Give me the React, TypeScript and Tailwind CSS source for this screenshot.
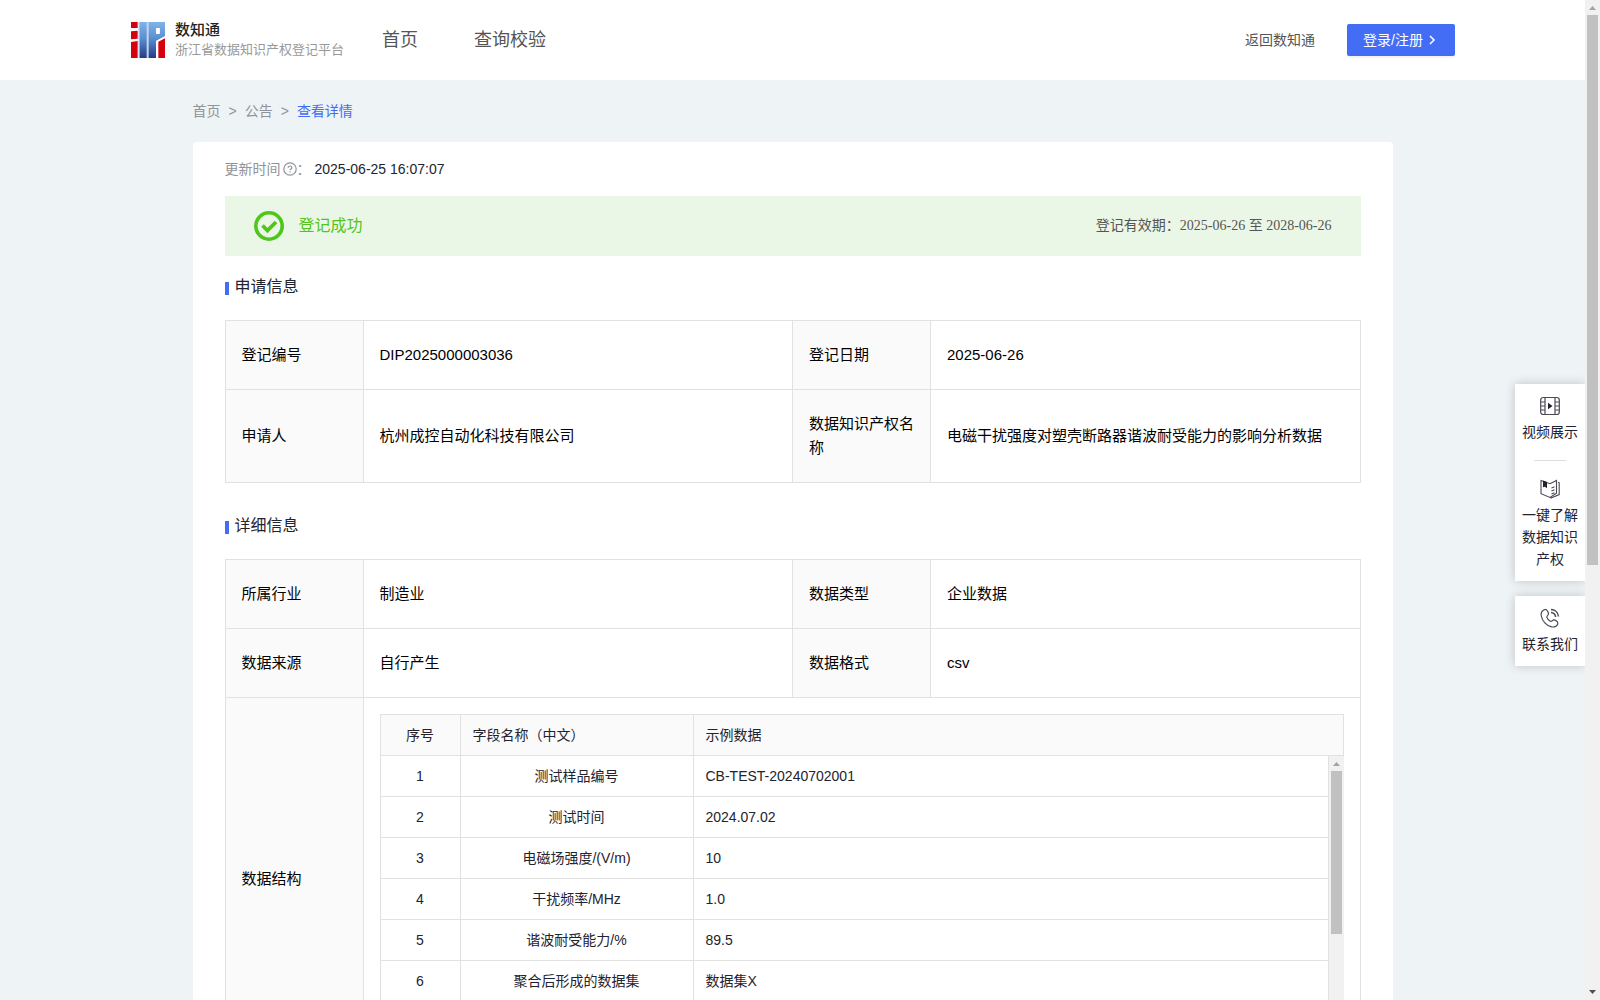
import { FC, ReactNode } from 'react'

interface InfoRow {
  label: string
  value: string
}

interface FieldRow {
  name: string
  sample: string
}

const applyInfo: [InfoRow, InfoRow][] = [
  [
    { label: '登记编号', value: 'DIP2025000003036' },
    { label: '登记日期', value: '2025-06-26' },
  ],
  [
    { label: '申请人', value: '杭州成控自动化科技有限公司' },
    { label: '数据知识产权名称', value: '电磁干扰强度对塑壳断路器谐波耐受能力的影响分析数据' },
  ],
]

const detailInfo: [InfoRow, InfoRow][] = [
  [
    { label: '所属行业', value: '制造业' },
    { label: '数据类型', value: '企业数据' },
  ],
  [
    { label: '数据来源', value: '自行产生' },
    { label: '数据格式', value: 'csv' },
  ],
]

const fields: FieldRow[] = [
  { name: '测试样品编号', sample: 'CB-TEST-20240702001' },
  { name: '测试时间', sample: '2024.07.02' },
  { name: '电磁场强度/(V/m)', sample: '10' },
  { name: '干扰频率/MHz', sample: '1.0' },
  { name: '谐波耐受能力/%', sample: '89.5' },
  { name: '聚合后形成的数据集', sample: '数据集X' },
]

const Logo: FC = () => (
  <svg viewBox="0 0 102 108" className="h-9 w-[34px] shrink-0" aria-hidden="true">
    <defs>
      <linearGradient id="logoBlue" x1="0" y1="0" x2="0" y2="108" gradientUnits="userSpaceOnUse">
        <stop offset="0" stopColor="#7fb4ea" />
        <stop offset="0.45" stopColor="#5b8fd0" />
        <stop offset="1" stopColor="#263a86" />
      </linearGradient>
    </defs>
    <path fill="#d7000f" d="M0 0h20v18H0zM0 28l20-2v24L0 52zM0 60l20-3v51H0z" />
    <path fill="#c3d6ee" d="M22 0h56v108H22z" />
    <path fill="url(#logoBlue)" d="M26 0h21v108H26zM53 0h49v43L75 57v51H53zM75 18v17h11V18z" fillRule="evenodd" />
    <path fill="#fff" d="M75 18h11v17H75zM75 57l27-14v6L80 60v48h-5z" />
    <path fill="#d7000f" d="M82 59l20-10v59H82z" />
  </svg>
)

const Header: FC = () => (
  <header className="flex h-20 items-center bg-white pr-[130px] pl-[131px]">
    <a href="#" className="flex items-center gap-2.5">
      <Logo />
      <span className="flex flex-col">
        <span className="text-[15px] leading-5 font-medium text-[#222222]">数知通</span>
        <span className="text-[13px] leading-5 text-[#999999]">浙江省数据知识产权登记平台</span>
      </span>
    </a>
    <nav className="ml-[38px] flex gap-14 text-lg text-[#555555]">
      <a href="#">首页</a>
      <a href="#">查询校验</a>
    </nav>
    <div className="ml-auto flex items-center gap-8 text-sm">
      <a href="#" className="text-[#555555]">
        返回数知通
      </a>
      <button
        type="button"
        className="flex h-8 w-[108px] items-center gap-0.5 rounded-[2px] bg-[#446df6] pl-4 text-white shadow-[0_2px_0_rgba(0,0,0,0.045)]"
      >
        登录/注册
        <svg viewBox="0 0 14 14" className="size-3.5" aria-hidden="true">
          <path d="M5 3l4 4-4 4" fill="none" stroke="currentColor" strokeWidth="1.5" />
        </svg>
      </button>
    </div>
  </header>
)

const Breadcrumb: FC = () => (
  <nav className="flex h-[62px] items-center gap-2 text-sm text-[#909399]">
    <a href="#">首页</a>
    <span className="font-medium">&gt;</span>
    <a href="#">公告</a>
    <span className="font-medium">&gt;</span>
    <a href="#" className="text-[#446df6]">
      查看详情
    </a>
  </nav>
)

const SectionTitle: FC<{ children: ReactNode }> = ({ children }) => (
  <h2 className="flex items-center gap-1.5 text-base leading-6 text-[#23232f]">
    <span className="mt-0.5 h-[13px] w-1 bg-[#446df6]" />
    {children}
  </h2>
)

const InfoTable: FC<{ rows: [InfoRow, InfoRow][]; children?: ReactNode }> = ({ rows, children }) => (
  <table className="w-full table-fixed border-collapse text-left text-[15px] leading-6 text-black">
    <colgroup>
      <col className="w-[138px]" />
      <col />
      <col className="w-[138px]" />
      <col />
    </colgroup>
    <tbody>
      {rows.map((row) => (
        <tr key={row[0].label}>
          {row.map(({ label, value }) => [
            <th key={label} scope="row" className="border border-[#e1e1e1] bg-[#fafafa] px-4 py-[22px] font-normal">
              {label}
            </th>,
            <td key={value} className="border border-[#e1e1e1] px-4 py-[22px]">
              {value}
            </td>,
          ])}
        </tr>
      ))}
      {children}
    </tbody>
  </table>
)

const FieldCols: FC = () => (
  <colgroup>
    <col className="w-20" />
    <col className="w-[233px]" />
    <col />
  </colgroup>
)

const FieldTable: FC = () => (
  <div className="text-sm text-[#23232f]">
    <table className="w-full table-fixed border-separate border-spacing-0 border-t border-l border-[#e1e1e1]">
      <FieldCols />
      <thead>
        <tr className="h-[41px] bg-[#fafafa] text-left">
          <th className="border-r border-b border-[#e1e1e1] text-center font-normal">序号</th>
          <th className="border-r border-b border-[#e1e1e1] px-3 font-normal">字段名称（中文）</th>
          <th className="border-r border-b border-[#e1e1e1] px-3 font-normal">示例数据</th>
        </tr>
      </thead>
    </table>
    <div className="flex h-[287px] overflow-hidden">
      <div className="min-w-0 flex-1">
        <table className="w-full table-fixed border-separate border-spacing-0 border-l border-[#e1e1e1]">
          <FieldCols />
          <tbody>
            {fields.map(({ name, sample }, i) => (
              <tr key={name} className="h-[41px]">
                <td className="border-r border-b border-[#e1e1e1] text-center">{i + 1}</td>
                <td className="border-r border-b border-[#e1e1e1] px-3 text-center">{name}</td>
                <td className="border-r border-b border-[#e1e1e1] px-3">{sample}</td>
              </tr>
            ))}
          </tbody>
        </table>
      </div>
      <div className="flex w-[15px] flex-col items-center bg-[#f1f1f1]" aria-hidden="true">
        <ScrollArrow color="#a3a3a3" />
        <div className="h-[163px] w-[11px] bg-[#c1c1c1]" />
      </div>
    </div>
  </div>
)

const ScrollArrow: FC<{ color: string; down?: boolean }> = ({ color, down = false }) => (
  <svg viewBox="0 0 15 15" className="size-[15px] shrink-0" aria-hidden="true">
    <path d={down ? 'M4 5h7L7.500 9z' : 'M4 10h7L7.500 6z'} fill={color} />
  </svg>
)

const PageScrollbar: FC = () => (
  <div className="flex w-[15px] shrink-0 flex-col items-center bg-[#f1f1f1]" aria-hidden="true">
    <ScrollArrow color="#a3a3a3" />
    <div className="h-[55%] w-[11px] bg-[#c1c1c1]" />
    <div className="flex-1" />
    <ScrollArrow color="#505050" down />
  </div>
)

const VideoIcon: FC = () => (
  <svg viewBox="0 0 20 20" className="size-5" fill="none" stroke="#4a4a52" aria-hidden="true">
    <rect x="0.700" y="1.500" width="18.600" height="17" rx="2.500" strokeWidth="1.200" />
    <path d="M5 1.500v17M15 1.500v17M1 6h4M1 10h4M1 14h4M15 6h4M15 10h4M15 14h4" strokeWidth="1.200" />
    <path d="M8 6.800v6.400l4.500-3.200z" fill="#23232f" stroke="none" />
  </svg>
)

const BookIcon: FC = () => (
  <svg viewBox="0 0 20 20" className="size-5" fill="none" stroke="#4a4a52" strokeWidth="1.100" aria-hidden="true">
    <path d="M1 1.500l9 3.200 6.500-3.200v12.800L10 18.500l-9-3.800zM18 3.300l1.200.5v11.800L10.500 19.300" />
    <path d="M11.500 9l3-1.300M11.500 12l3-1.300M11.500 15l3-1.300" />
    <path d="M3 1.500l4 1.500v6.200L5 7.700 3 8.300z" fill="#23232f" stroke="none" />
  </svg>
)

const PhoneIcon: FC = () => (
  <svg viewBox="0 0 20 20" className="size-5" fill="none" stroke="#4a4a52" strokeWidth="1.200" aria-hidden="true">
    <path d="M5 1.500C2 2.500.7 5 1.300 8c1 5 5 9.800 10.200 10.800 2.500.5 5-.3 6-2.300.7-1.500.3-2.500-1-3.500-1.600-1.200-2.900-1.600-4.100-.4-.8.8-1.500 1.100-2.500.4C8.300 11.900 7.400 10.700 7 9.600c-.4-1 0-1.600.7-2.200 1-.9 1-1.800.3-3.300C7.200 2.300 6.500 1.100 5 1.500z" />
    <path d="M11 1.500c4 0 7 3 7.500 7M11 4.500c2.500.2 4.300 2 4.600 4.500" strokeWidth="1.500" />
  </svg>
)

const SideLink: FC<{ icon: ReactNode; text: string }> = ({ icon, text }) => (
  <a href="#" className="flex flex-col items-center px-[7px] pt-3 pb-[11px] text-center leading-[22px]">
    {icon}
    <span className="mt-[5px]">{text}</span>
  </a>
)

const SideBar: FC = () => (
  <aside className="absolute top-96 right-0 flex w-[70px] flex-col gap-[15px] text-sm text-[#23232f]">
    <div className="bg-white shadow-[0_0_10px_rgba(0,0,0,0.2)]">
      <SideLink icon={<VideoIcon />} text="视频展示" />
      <div className="mx-auto my-1.5 h-px w-8 bg-[#dddddd]" />
      <SideLink icon={<BookIcon />} text="一键了解数据知识产权" />
    </div>
    <div className="bg-white shadow-[0_0_10px_rgba(0,0,0,0.2)]">
      <SideLink icon={<PhoneIcon />} text="联系我们" />
    </div>
  </aside>
)

export default function App() {
  return (
    <div className="relative flex h-screen overflow-hidden bg-[#eef3f6] font-['Liberation_Sans','Noto_Sans_CJK_SC',sans-serif]">
      <div className="relative min-w-0 flex-1 overflow-hidden">
        <Header />
        <main className="mx-auto max-w-[1200px]">
          <Breadcrumb />
          <div className="rounded-[4px] bg-white px-8 pt-4 pb-8">
            <div className="flex items-center text-sm leading-[22px]">
              <span className="text-[#909399]">更新时间</span>
              <svg viewBox="0 0 14 14" className="ml-0.5 size-3.5" fill="none" stroke="#909399" aria-hidden="true">
                <circle cx="7" cy="7" r="6.200" strokeWidth="1.200" />
                <path d="M5.200 5.700c0-2.300 3.700-2.300 3.700 0 0 1.200-1.900 1.200-1.900 2.500M7 9.200v1.200" strokeWidth="1.200" />
              </svg>
              <span className="text-[#909399]">：</span>
              <span className="ml-1 text-[#23232f]">2025-06-25 16:07:07</span>
            </div>

            <div className="mt-4 flex h-[60px] items-center bg-[#ebf7e6] px-[29px]">
              <svg viewBox="0 0 30 30" className="size-[30px]" fill="none" stroke="#4fc61c" aria-hidden="true">
                <circle cx="15" cy="15" r="13.200" strokeWidth="3.600" />
                <path d="M8.500 14.500l5 5 8.500-8.500" strokeWidth="3.800" />
              </svg>
              <span className="ml-[15px] text-base text-[#52c41a]">登记成功</span>
              <span className="ml-auto font-['Liberation_Serif','Noto_Sans_CJK_SC',serif] text-sm text-[#555555]">
                登记有效期：2025-06-26 至 2028-06-26
              </span>
            </div>

            <div className="mt-[19px] flex flex-col gap-[21px]">
              <SectionTitle>申请信息</SectionTitle>
              <InfoTable rows={applyInfo} />
            </div>

            <div className="mt-[31px] flex flex-col gap-[21px]">
              <SectionTitle>详细信息</SectionTitle>
              <InfoTable rows={detailInfo}>
                <tr>
                  <th scope="row" className="border border-[#e1e1e1] bg-[#fafafa] px-4 font-normal">
                    数据结构
                  </th>
                  <td colSpan={3} className="border border-[#e1e1e1] p-4">
                    <FieldTable />
                  </td>
                </tr>
              </InfoTable>
            </div>
          </div>
        </main>
        <SideBar />
      </div>
      <PageScrollbar />
    </div>
  )
}
